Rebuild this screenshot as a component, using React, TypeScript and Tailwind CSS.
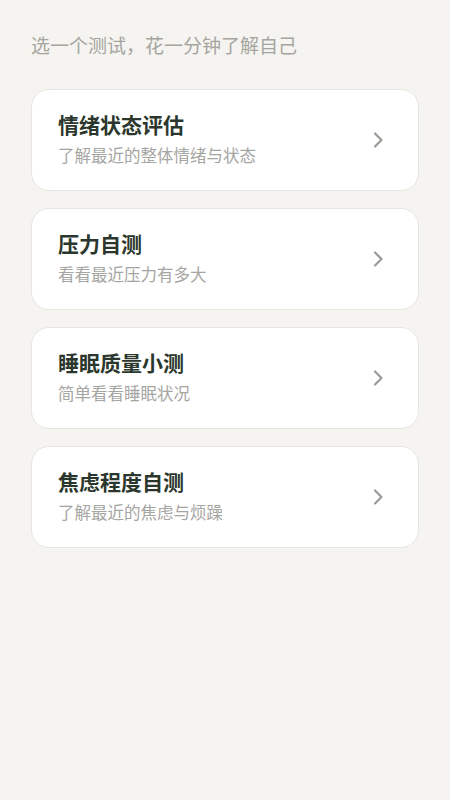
const tests = [
  { title: "情绪状态评估", desc: "了解最近的整体情绪与状态" },
  { title: "压力自测", desc: "看看最近压力有多大" },
  { title: "睡眠质量小测", desc: "简单看看睡眠状况" },
  { title: "焦虑程度自测", desc: "了解最近的焦虑与烦躁" },
];

function Chevron() {
  return (
    <svg width="12" height="18" viewBox="0 0 12 18" fill="none">
      <polyline
        points="3,2.5 9.5,9 3,15.5"
        stroke="#9a9a97"
        strokeWidth="2.2"
        strokeLinecap="round"
        strokeLinejoin="round"
      />
    </svg>
  );
}

export default function App() {
  return (
    <div
      className="min-h-screen bg-[#f5f4f0] px-[31px] pt-[31px]"
      style={{ fontFamily: '"Noto Sans CJK SC", "Noto Sans", sans-serif' }}
    >
      <p className="text-[19px] leading-[28px] text-[#a5a5a0]">
        选一个测试，花一分钟了解自己
      </p>

      <div className="mt-[30px] flex flex-col gap-[17px]">
        {tests.map((t) => (
          <button
            key={t.title}
            className="flex h-[102px] items-center justify-between rounded-[18px] border border-[#e6e6e0] bg-white pl-[26px] pr-[34px] text-left"
          >
            <div className="mb-[4px] flex flex-col">
              <span className="text-[21px] font-semibold leading-[28px] text-[#2b372c]">
                {t.title}
              </span>
              <span className="mt-[6px] text-[16.5px] leading-[22px] text-[#a5a5a2]">
                {t.desc}
              </span>
            </div>
            <Chevron />
          </button>
        ))}
      </div>
    </div>
  );
}
